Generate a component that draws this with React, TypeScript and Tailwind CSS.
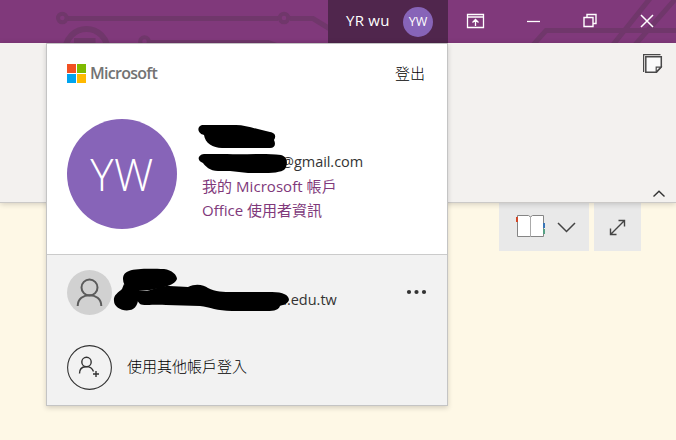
import React from 'react';

const latin = "font-['Open_Sans','Noto_Sans_CJK_TC',sans-serif]";

function CircuitArt() {
  return (
    <svg className="absolute inset-0" width="676" height="43" fill="none" stroke="#70376b" strokeWidth="5">
      <path d="M66 18.5H278M290 18.5H313L330 29" />
      <circle cx="62.3" cy="18" r="4.3" strokeWidth="4" />
      <circle cx="284" cy="18" r="4.3" strokeWidth="4" />
      <circle cx="86.5" cy="50" r="21" strokeWidth="6" />
      <path d="M74 38H95.5V43H74Z" fill="#70376b" stroke="none" />
      <circle cx="144.5" cy="41.5" r="4.3" strokeWidth="4" />
      <path d="M149 42.5H268L278 46" />
      <path d="M533 45L546 30.5H676M612 46L652 -4M634 46L678 -4" />
    </svg>
  );
}

function TitleBar() {
  return (
    <header className="relative flex h-[43px] bg-[#80397b] pl-[328px] text-white">
      <CircuitArt />
      <div className="relative flex w-[120px] items-center bg-[#50264d] pl-[18px]">
        <span className="-mt-[3px] w-[57px] whitespace-nowrap text-[15px] leading-5 tracking-[0.25px]">YR wu</span>
        <span className="flex h-[30px] w-[30px] items-center justify-center rounded-full bg-[#8764b8] pt-px text-[12.5px]">YW</span>
      </div>
      <div className="relative flex flex-1 items-center text-white">
        <svg width="228" height="43" fill="none" stroke="currentColor" strokeWidth="1.3">
          <path d="M19.5 14.5H35.5V27.5H19.5ZM19.5 17H35.5M27.5 26V19.5M24.5 22.5L27.5 19.5L30.5 22.5" />
          <path d="M79 21.5H92" />
          <path d="M136 17.5H145V26.5H136ZM139 17V14.5H148V23.5H145.5" strokeWidth="1.4" />
          <path d="M193 15L205 27M205 15L193 27" strokeWidth="1.5" />
        </svg>
      </div>
    </header>
  );
}

function Ribbon() {
  return (
    <section className="relative z-10 flex h-[160px] flex-col items-end justify-between border-b border-[#cbc9c7] bg-[#f3f1ef] shadow-[0_1px_6px_rgba(0,0,0,0.18)]">
      <svg className="mr-[13px] mt-[11px]" width="20" height="20" fill="none" stroke="#494949">
        <path d="M.5 18V.5H17.5" strokeWidth="1.4" />
        <path d="M2.8 2.8H18.3V13L13.5 18.2H2.8Z" fill="#fafafa" strokeWidth="1.5" />
        <path d="M13.2 18V13.2H18L13.2 18" strokeWidth="1.2" />
      </svg>
      <svg className="mb-[4px] mr-[10px]" width="14" height="8" fill="none" stroke="#333" strokeWidth="1.4">
        <path d="M1.5 6.5L7 1.2L12.5 6.5" />
      </svg>
    </section>
  );
}

function ViewButtons() {
  return (
    <div className="flex gap-[5px] pl-[499px]">
      <div className="flex h-12 w-[90px] bg-[#e9e9e9]">
        <svg width="90" height="48" fill="none">
          <path d="M18.5 12.5H29.5L31.5 14L33.5 12.5H44.5V33.5H18.5Z" fill="#fff" stroke="#858585" />
          <path d="M31.5 13.5V34" stroke="#aaa" />
          <path d="M17 14H19V19H17Z" fill="#d24726" />
          <path d="M44 20H46V25H44Z" fill="#3875b7" />
          <path d="M44 26H46V31H44Z" fill="#56a184" />
          <path d="M59 20L67.5 28.5L76 20" stroke="#444" strokeWidth="1.5" />
        </svg>
      </div>
      <div className="h-12 w-[47px] bg-[#e9e9e9]">
        <svg width="47" height="48" fill="none" stroke="#444" strokeWidth="1.4">
          <path d="M16.5 31.5L30.5 17.5M24.5 17.5H30.5V23.5M16.5 25.5V31.5H22.5" />
        </svg>
      </div>
    </div>
  );
}

function Redactions() {
  return (
    <svg className="pointer-events-none absolute left-0 top-0" width="400" height="361">
      <path d="M155 81H189C200 81 211 86 223 88C229 89 229 93 227 96C229 100 228 104 223 104H175C166 104 158 99 157 91C151 90 149 83 155 81Z" />
      <path d="M157 110H180C197 111 216 109 234 111C241 113 241 120 238 125C233 130 216 129 201 129L183 127H171C163 127 158 122 156 119C150 117 150 111 157 110Z" />
      <path d="M82 227C90 224 107 225 117 225C125 226 130 231 130 235C128 241 118 243 108 245C99 247 89 247 83 247Q76 242 76 235C76 230 79 228 82 227Z" />
      <path d="M77 240L88 247C93 250 92 262 86 265C78 269 67 264 67 257C66 251 72 248 75 245Z" />
      <path d="M88 247H100L113 243C121 241 133 243 141 243C149 239 157 241 161 244C168 248 177 248 185 248H225C236 248 242 251 242 256C241 260 235 261 233 262C231 267 225 267 217 267H185C170 267 163 263 153 262L119 261C108 260 96 262 93 260L87 253Z" />
    </svg>
  );
}

function AccountMenu() {
  return (
    <aside className="absolute left-[46px] top-[43px] z-20 h-[363px] w-[402px] border border-[#c4c4c4] bg-[#f2f2f2] text-[15px] text-[#333] shadow-[0_2px_5px_rgba(0,0,0,0.16)]">
      <div className="h-[211px] border-b border-[#cbcbcb] bg-white pl-5 pt-[17px]">
        <div className="flex h-[25px] items-center">
          <div className="grid grid-cols-2 gap-px">
            <i className="h-[9px] w-[9px] bg-[#f25022]" />
            <i className="h-[9px] w-[9px] bg-[#7fba00]" />
            <i className="h-[9px] w-[9px] bg-[#00a4ef]" />
            <i className="h-[9px] w-[9px] bg-[#ffb900]" />
          </div>
          <span className="-mt-[2px] ml-[4px] text-[16px] font-semibold tracking-[-0.72px] text-[#737373]">Microsoft</span>
          <span className="ml-auto mr-[22px] -mt-px font-light text-black">登出</span>
        </div>
        <div className="mt-[33px] flex items-center">
          <div className="flex h-[110px] w-[110px] items-center justify-center rounded-full bg-[#8764b8] text-[44px] font-light tracking-[0.6px] text-white">YW</div>
          <div className="ml-[25px] w-[170px] whitespace-nowrap pt-6 leading-6 text-[#80397b]">
            <p className="pl-[79px] text-[14.5px] tracking-[-0.05px] text-[#333]">@gmail.com</p>
            <p className="tracking-[0.05px]">我的 Microsoft 帳戶</p>
            <p>Office 使用者資訊</p>
          </div>
        </div>
      </div>
      <div className="flex flex-col gap-[30px] pl-5 pt-[15px]">
        <div className="flex h-[45px] items-center">
          <svg width="45" height="45" fill="none" stroke="#5b5b5b" strokeWidth="2">
            <circle cx="22.5" cy="22.5" r="22.5" fill="#d1d1d1" stroke="none" />
            <circle cx="22.5" cy="17.5" r="8" />
            <path d="M10.7 36C10.7 21.5 34.3 21.5 34.3 36" />
          </svg>
          <span className="ml-[166px] mt-[14px] w-[128px] text-[14.5px]">u.edu.tw</span>
          <svg className="-mt-[2px]" width="22" height="6" fill="#333">
            <circle cx="3" cy="3" r="2.1" />
            <circle cx="10.5" cy="3" r="2.1" />
            <circle cx="18" cy="3" r="2.1" />
          </svg>
        </div>
        <div className="flex h-[45px] items-center gap-[15px]">
          <svg width="45" height="45" fill="none" stroke="#333" strokeWidth="1.4">
            <circle cx="22.5" cy="22.5" r="21.9" strokeWidth="1.1" />
            <circle cx="19.5" cy="17" r="4.7" />
            <path d="M12.5 28.5C12.5 19.5 24 20 26.5 26.5M29 26V32M26 29H32" />
          </svg>
          <span className="-mt-[2px] font-light text-black">使用其他帳戶登入</span>
        </div>
      </div>
      <Redactions />
    </aside>
  );
}

export default function App() {
  return (
    <main className={`relative h-[440px] w-[676px] overflow-hidden bg-[#fef8e6] ${latin}`}>
      <TitleBar />
      <Ribbon />
      <ViewButtons />
      <AccountMenu />
    </main>
  );
}
